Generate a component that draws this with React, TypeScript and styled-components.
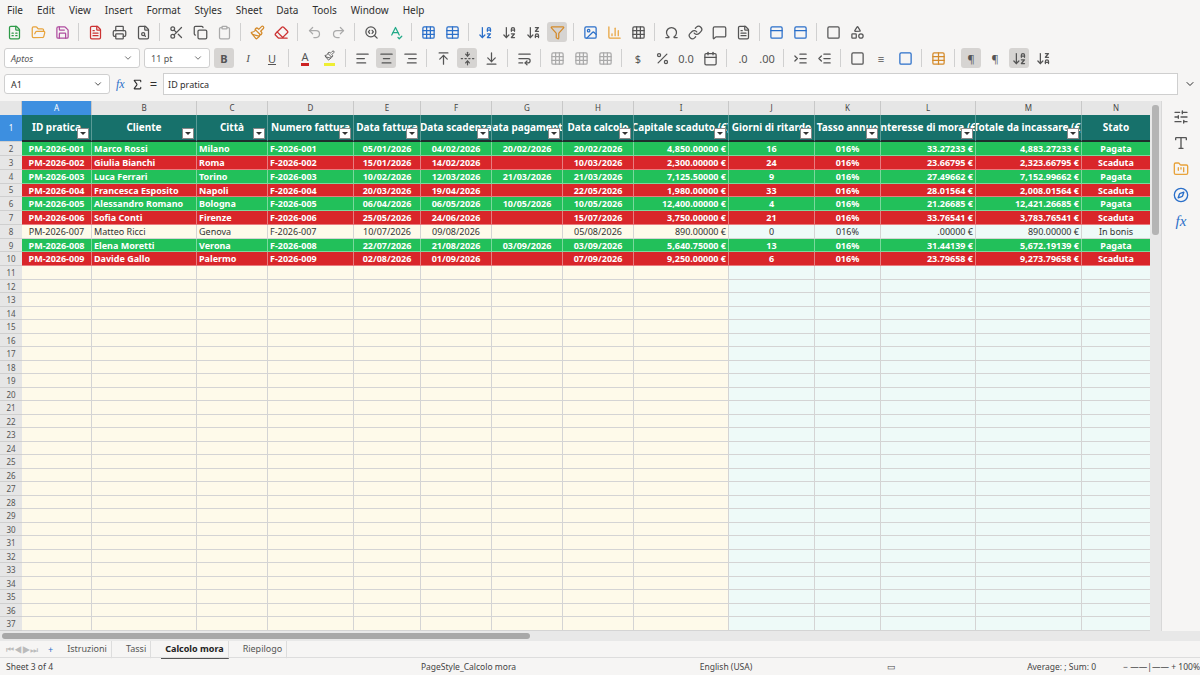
import React from "react";
import styled, { createGlobalStyle } from "styled-components";
import {
  FileSpreadsheet, FolderOpen, Save, FileText, Printer, FileSearch, Scissors, Copy, Clipboard,
  Paintbrush, Eraser, Undo2, Redo2, SearchCode, SpellCheck, Grid3x3, Table, ArrowDownAZ, ArrowDownZA,
  Filter, Image, BarChart3, Sigma, Omega, Link, MessageSquare, PanelTop, Shapes, AlignLeft, AlignCenter,
  AlignRight, ArrowUpToLine, FoldVertical, ArrowDownToLine, WrapText, Percent, Calendar, SlidersHorizontal,
  Type, FolderKanban, Compass, Square, ChevronDown, IndentIncrease, IndentDecrease,
} from "lucide-react";

const GlobalStyle = createGlobalStyle`
  html, body { margin: 0; padding: 0; width: 1200px; height: 675px; overflow: hidden; background: #f6f5f4; }
  body { font-family: "Noto Sans", "Open Sans", sans-serif; color: #2e2e2e; }
`;

const COLS = [70, 105, 71, 86, 67, 71, 71, 71, 95, 86, 66, 95, 106, 69];
const LETTERS = "ABCDEFGHIJKLMN".split("");
const TEMPLATE = `22px ${COLS.map((c) => c + "px").join(" ")}`;
const ALIGN = ["center", "left", "left", "left", "center", "center", "center", "center", "right", "center", "center", "right", "right", "center"];

const HEADERS = ["ID pratica", "Cliente", "Città", "Numero fattura", "Data fattura", "Data scadenza", "Data pagamento", "Data calcolo", "Capitale scaduto (€)", "Giorni di ritardo", "Tasso annuo", "Interesse di mora (€)", "Totale da incassare (€)", "Stato"];

type Kind = "ok" | "late" | "plain";
const DATA: [Kind, string[]][] = [
  ["ok", ["PM-2026-001", "Marco Rossi", "Milano", "F-2026-001", "05/01/2026", "04/02/2026", "20/02/2026", "20/02/2026", "4,850.00000 €", "16", "016%", "33.27233 €", "4,883.27233 €", "Pagata"]],
  ["late", ["PM-2026-002", "Giulia Bianchi", "Roma", "F-2026-002", "15/01/2026", "14/02/2026", "", "10/03/2026", "2,300.00000 €", "24", "016%", "23.66795 €", "2,323.66795 €", "Scaduta"]],
  ["ok", ["PM-2026-003", "Luca Ferrari", "Torino", "F-2026-003", "10/02/2026", "12/03/2026", "21/03/2026", "21/03/2026", "7,125.50000 €", "9", "016%", "27.49662 €", "7,152.99662 €", "Pagata"]],
  ["late", ["PM-2026-004", "Francesca Esposito", "Napoli", "F-2026-004", "20/03/2026", "19/04/2026", "", "22/05/2026", "1,980.00000 €", "33", "016%", "28.01564 €", "2,008.01564 €", "Scaduta"]],
  ["ok", ["PM-2026-005", "Alessandro Romano", "Bologna", "F-2026-005", "06/04/2026", "06/05/2026", "10/05/2026", "10/05/2026", "12,400.00000 €", "4", "016%", "21.26685 €", "12,421.26685 €", "Pagata"]],
  ["late", ["PM-2026-006", "Sofia Conti", "Firenze", "F-2026-006", "25/05/2026", "24/06/2026", "", "15/07/2026", "3,750.00000 €", "21", "016%", "33.76541 €", "3,783.76541 €", "Scaduta"]],
  ["plain", ["PM-2026-007", "Matteo Ricci", "Genova", "F-2026-007", "10/07/2026", "09/08/2026", "", "05/08/2026", "890.00000 €", "0", "016%", ".00000 €", "890.00000 €", "In bonis"]],
  ["ok", ["PM-2026-008", "Elena Moretti", "Verona", "F-2026-008", "22/07/2026", "21/08/2026", "03/09/2026", "03/09/2026", "5,640.75000 €", "13", "016%", "31.44139 €", "5,672.19139 €", "Pagata"]],
  ["late", ["PM-2026-009", "Davide Gallo", "Palermo", "F-2026-009", "02/08/2026", "01/09/2026", "", "07/09/2026", "9,250.00000 €", "6", "016%", "23.79658 €", "9,273.79658 €", "Scaduta"]],
];

const Page = styled.div`width: 1200px; height: 675px; display: flex; flex-direction: column; overflow: hidden;`;
const Menu = styled.div`height: 17px; display: flex; gap: 14px; padding: 1px 7px; font-size: 10px; align-items: center;`;
const Bar = styled.div`height: 26px; display: flex; align-items: center; gap: 4px; padding: 0 4px; color: #555;`;
const Sep = styled.div`width: 1px; height: 18px; background: #d0d0d0; margin: 0 2px;`;
const IconBtn = styled.div<{ $on?: boolean }>`
  width: 20px; height: 20px; display: flex; align-items: center; justify-content: center; border-radius: 3px;
  background: ${(p) => (p.$on ? "#d6d4d2" : "transparent")}; font-size: 11px;
`;
const Combo = styled.div<{ $w: number }>`
  width: ${(p) => p.$w}px; height: 20px; background: #fff; border: 1px solid #cfcfcf; border-radius: 3px;
  display: flex; align-items: center; justify-content: space-between; padding: 0 6px; font-size: 9px; box-sizing: border-box;
`;
const Formula = styled.div`height: 26px; display: flex; align-items: center; gap: 6px; padding: 0 4px; font-size: 9px;`;
const Input = styled.div`flex: 1; height: 20px; background: #fff; border: 1px solid #cfcfcf; display: flex; align-items: center; padding-left: 4px;`;
const Main = styled.div`flex: 1; display: flex; margin-top: 4px; min-height: 0;`;
const SheetArea = styled.div`width: 1151px; display: flex; flex-direction: column; overflow: hidden;`;
const VScroll = styled.div`width: 11px; background: #e8e8e8; position: relative;
  &::after { content: ""; position: absolute; left: 2px; right: 2px; top: 4px; height: 130px; background: #b4b4b4; border-radius: 3px; }`;
const Side = styled.div`width: 38px; border-left: 1px solid #d8d8d8; display: flex; flex-direction: column; align-items: center; gap: 10px; padding-top: 8px; color: #555;`;
const Row = styled.div<{ $h: number }>`display: grid; grid-template-columns: ${TEMPLATE}; height: ${(p) => p.$h}px;`;
const ColHead = styled.div<{ $sel?: boolean }>`
  background: ${(p) => (p.$sel ? "#3d8fe0" : "#e6e6e6")}; color: ${(p) => (p.$sel ? "#fff" : "#444")};
  border-right: 1px solid #c8c8c8; font-size: 8px; display: flex; align-items: center; justify-content: center;
`;
const RowHead = styled.div<{ $sel?: boolean }>`
  background: ${(p) => (p.$sel ? "#3d8fe0" : "#e6e6e6")}; color: ${(p) => (p.$sel ? "#fff" : "#555")};
  border-bottom: 1px solid #cfcfcf; font-size: 8px; display: flex; align-items: center; justify-content: center;
`;
const HeadCell = styled.div`
  position: relative; background: #17716b; color: #fff; font-weight: 700; font-size: 10px; white-space: nowrap; overflow: hidden;
  display: flex; align-items: center; justify-content: center; border-right: 1px solid #5a9a96; border-bottom: 2px solid #1e2e2c;
`;
const Drop = styled.span`position: absolute; right: 2px; bottom: 1px; width: 10px; height: 9px; background: #fff; border: 1px solid #888;
  &::after { content: ""; position: absolute; left: 2px; top: 3px; border: 3px solid transparent; border-top: 3px solid #333; }`;
const BG = { ok: "#22c05a", late: "#d9262a", plain: "" };
const Cell = styled.div<{ $kind: Kind; $align: string; $col: number }>`
  background: ${(p) => BG[p.$kind] || (p.$col < 9 ? "#fefaea" : "#eefaf8")};
  color: ${(p) => (p.$kind === "plain" ? "#333" : "#fff")}; font-weight: ${(p) => (p.$kind === "plain" ? 400 : 700)};
  text-align: ${(p) => p.$align}; font-size: 9px; line-height: 13px; padding: 0 2px; white-space: nowrap; overflow: hidden;
  border-right: 1px solid ${(p) => (p.$kind === "plain" ? "#d4d4d4" : "rgba(255,255,255,0.4)")};
  border-bottom: 1px solid ${(p) => (p.$kind === "plain" ? "#d4d4d4" : "rgba(255,255,255,0.4)")};
`;
const HScroll = styled.div`height: 10px; background: #e8e8e8; position: relative;
  &::after { content: ""; position: absolute; left: 2px; top: 2px; height: 6px; width: 528px; background: #a8a8a8; border-radius: 3px; }`;
const Tabs = styled.div`height: 16px; display: flex; align-items: center; font-size: 9px; padding-left: 6px; gap: 10px; color: #555;`;
const Tab = styled.div<{ $on?: boolean }>`padding: 2px 4px; font-weight: ${(p) => (p.$on ? 700 : 400)}; color: ${(p) => (p.$on ? "#222" : "#555")};
  border-bottom: 2px solid ${(p) => (p.$on ? "#555" : "transparent")}; border-right: 1px solid #ddd;`;
const Status = styled.div`height: 17px; border-top: 1px solid #ddd; display: grid; grid-template-columns: 190px 410px 240px 90px 160px 110px; align-items: center; font-size: 8.5px; color: #444; padding-left: 6px;`;

const s = 15;
const Icons1 = [
  <FileSpreadsheet size={s} color="#2e9a47" />, <FolderOpen size={s} color="#e8a33b" />, <Save size={s} color="#b04ea0" />, null,
  <FileText size={s} color="#c33" />, <Printer size={s} />, <FileSearch size={s} />, null,
  <Scissors size={s} />, <Copy size={s} />, <Clipboard size={s} color="#aaa" />, null, <Paintbrush size={s} color="#d48a2a" />, <Eraser size={s} color="#c33" />, null,
  <Undo2 size={s} color="#aaa" />, <Redo2 size={s} color="#aaa" />, null, <SearchCode size={s} />, <SpellCheck size={s} color="#2a8" />, null,
  <Grid3x3 size={s} color="#2a6fc9" />, <Table size={s} color="#2a6fc9" />, null, <ArrowDownAZ size={s} color="#2a6fc9" />, <ArrowDownAZ size={s} />, <ArrowDownZA size={s} />,
  <Filter size={s} color="#d48a2a" />, null, <Image size={s} color="#2a6fc9" />, <BarChart3 size={s} color="#e8a33b" />, <Grid3x3 size={s} />, null,
  <Omega size={s} />, <Link size={s} />, <MessageSquare size={s} />, <FileText size={s} />, null, <PanelTop size={s} color="#2a6fc9" />, <PanelTop size={s} color="#2a6fc9" />, null, <Square size={s} />, <Shapes size={s} />,
];

export default function App() {
  const empty = Array.from({ length: 27 }, (_, i) => i + 11);
  return (
    <Page>
      <GlobalStyle />
      <Menu>{["File", "Edit", "View", "Insert", "Format", "Styles", "Sheet", "Data", "Tools", "Window", "Help"].map((m) => <span key={m}>{m}</span>)}</Menu>
      <Bar>{Icons1.map((ic, i) => (ic ? <IconBtn key={i} $on={i === 27}>{ic}</IconBtn> : <Sep key={i} />))}</Bar>
      <Bar>
        <Combo $w={136}><i>Aptos</i><ChevronDown size={10} /></Combo>
        <Combo $w={66}>11 pt<ChevronDown size={10} /></Combo>
        <IconBtn $on><b>B</b></IconBtn><IconBtn><i style={{ fontFamily: "Liberation Serif" }}>I</i></IconBtn><IconBtn><u>U</u></IconBtn><Sep />
        <IconBtn><span style={{ borderBottom: "3px solid #c22", lineHeight: "12px" }}>A</span></IconBtn>
        <IconBtn><span style={{ borderBottom: "3px solid #ee3", lineHeight: "12px" }}><Paintbrush size={11} /></span></IconBtn><Sep />
        <IconBtn><AlignLeft size={s} /></IconBtn><IconBtn $on><AlignCenter size={s} /></IconBtn><IconBtn><AlignRight size={s} /></IconBtn><Sep />
        <IconBtn><ArrowUpToLine size={s} /></IconBtn><IconBtn $on><FoldVertical size={s} /></IconBtn><IconBtn><ArrowDownToLine size={s} /></IconBtn><Sep />
        <IconBtn><WrapText size={s} /></IconBtn><Sep /><IconBtn><Grid3x3 size={s} color="#aaa" /></IconBtn><IconBtn><Grid3x3 size={s} color="#aaa" /></IconBtn><IconBtn><Grid3x3 size={s} color="#aaa" /></IconBtn><Sep />
        <IconBtn>$</IconBtn><IconBtn><Percent size={s} /></IconBtn><IconBtn>0.0</IconBtn><IconBtn><Calendar size={s} /></IconBtn><Sep />
        <IconBtn>.0</IconBtn><IconBtn>.00</IconBtn><Sep /><IconBtn><IndentIncrease size={s} /></IconBtn><IconBtn><IndentDecrease size={s} /></IconBtn><Sep />
        <IconBtn><Square size={s} /></IconBtn><IconBtn>≡</IconBtn><IconBtn><Square size={s} color="#2a6fc9" /></IconBtn><Sep /><IconBtn><Table size={s} color="#d48a2a" /></IconBtn><Sep />
        <IconBtn $on>¶</IconBtn><IconBtn>¶</IconBtn><IconBtn $on><ArrowDownAZ size={s} /></IconBtn><IconBtn><ArrowDownZA size={s} /></IconBtn>
      </Bar>
      <Formula>
        <Combo $w={106}>A1<ChevronDown size={10} /></Combo>
        <i style={{ color: "#2a6fc9", fontSize: 12, fontFamily: "Liberation Serif" }}>fx</i><Sigma size={13} /><span style={{ fontSize: 13 }}>=</span>
        <Input>ID pratica</Input><ChevronDown size={12} />
      </Formula>
      <Main>
        <SheetArea>
          <Row $h={14}>
            <ColHead />
            {LETTERS.map((l, i) => <ColHead key={l} $sel={i === 0}>{l}</ColHead>)}
          </Row>
          <Row $h={28}>
            <RowHead $sel>1</RowHead>
            {HEADERS.map((h, i) => <HeadCell key={h}>{h}{i < 13 && <Drop />}</HeadCell>)}
          </Row>
          {DATA.map(([k, vals], r) => (
            <Row $h={13.8} key={r}>
              <RowHead>{r + 2}</RowHead>
              {vals.map((v, c) => <Cell key={c} $kind={k} $align={ALIGN[c]} $col={c}>{v}</Cell>)}
            </Row>
          ))}
          {empty.map((n) => (
            <Row $h={13.8} key={n}>
              <RowHead>{n}</RowHead>
              {COLS.map((_, c) => <Cell key={c} $kind="plain" $align="left" $col={c} />)}
            </Row>
          ))}
        </SheetArea>
        <VScroll />
        <Side>
          <SlidersHorizontal size={16} /><Type size={16} /><FolderKanban size={16} color="#e8a33b" /><Compass size={16} color="#2a6fc9" />
          <i style={{ color: "#2a6fc9", fontFamily: "Liberation Serif", fontSize: 15 }}>fx</i>
        </Side>
      </Main>
      <HScroll />
      <Tabs>
        <span style={{ color: "#bbb" }}>⏮◀▶⏭</span><span style={{ color: "#2a6fc9" }}>+</span>
        <Tab>Istruzioni</Tab><Tab>Tassi</Tab><Tab $on>Calcolo mora</Tab><Tab>Riepilogo</Tab>
      </Tabs>
      <Status>
        <span>Sheet 3 of 4</span><span style={{ textAlign: "right", paddingRight: 90 }}>PageStyle_Calcolo mora</span>
        <span style={{ textAlign: "center" }}>English (USA)</span><span style={{ textAlign: "center" }}>▭</span>
        <span style={{ textAlign: "right" }}>Average: ; Sum: 0</span><span style={{ textAlign: "right", paddingRight: 6 }}>− ——|—— + 100%</span>
      </Status>
    </Page>
  );
}
